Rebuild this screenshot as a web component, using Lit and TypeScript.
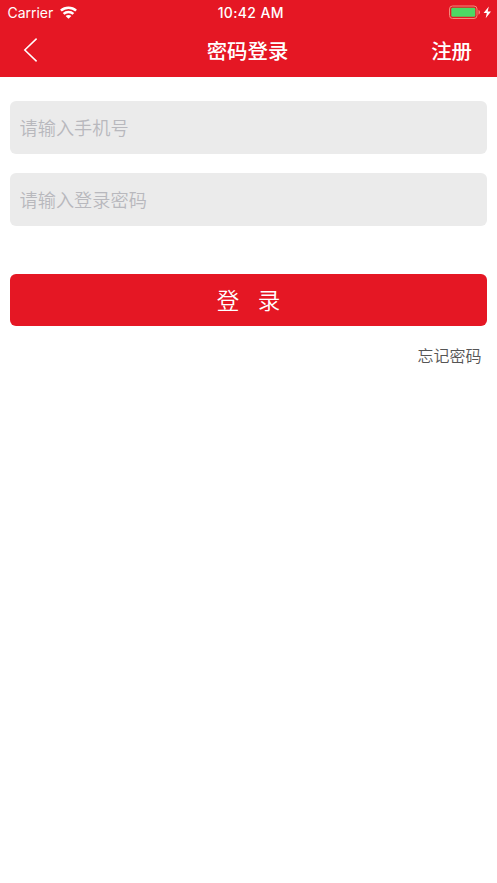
import { LitElement, html, css } from "lit";
import { customElement } from "lit/decorators.js";

@customElement("app-root")
export class AppRoot extends LitElement {
  static styles = css`
    :host {
      display: block;
      min-height: 100vh;
      background: #fff;
      font-family: Inter, "Noto Sans CJK SC", sans-serif;
    }
    * { box-sizing: border-box; }
    svg { display: block; }
    .header { height: 77px; background: #e51724; color: #fff; }
    .status, .nav {
      display: grid;
      grid-template-columns: 1fr auto 1fr;
      align-items: center;
    }
    .status { height: 25px; padding: 0 5px 0 7.5px; font-size: 14px; line-height: 25px; }
    .carrier { display: flex; align-items: center; gap: 6.5px; letter-spacing: -0.03px; }
    .wifi { margin-top: -1px; }
    .time { font-weight: 500; font-size: 14px; letter-spacing: 0.35px; padding-left: 2px; }
    .power { justify-self: end; }
    .nav { height: 52px; padding: 0 25px 0 23px; font-size: 20.4px; font-weight: 500; }
    .nav > span { padding-top: 1px; height: 52px; line-height: 51px; }
    .back { padding: 0 0 2px; border: 0; background: none; justify-self: start; }
    .register { justify-self: end; }
    .form { display: flex; flex-direction: column; padding: 24px 10px 0; }
    .field {
      width: 100%;
      height: 52.5px;
      margin: 0 0 19.5px;
      padding: 0 10px 1px 9.5px;
      border: 0;
      border-radius: 6px;
      background: #ebebeb;
      font: 350 18.2px "Noto Sans CJK SC", sans-serif;
      color: #333;
      outline: none;
    }
    .field::placeholder { color: #b8b8bd; opacity: 1; }
    .submit {
      height: 52.4px;
      margin-top: 29px;
      padding: 0 0 2px;
      border: 0;
      border-radius: 6px;
      background: #e51724;
      color: #fff;
      font: 350 22.5px "Noto Sans CJK SC", sans-serif;
      display: flex;
      justify-content: center;
      align-items: center;
      gap: 18.5px;
    }
    .forgot { align-self: flex-end; margin: 17.2px 5.5px 0 0; font-size: 16px; line-height: 24px; font-weight: 350; color: #555; }
  `;

  render() {
    return html`
      <header class="header">
        <div class="status">
          <div class="carrier">
            <span>Carrier</span>
            <svg class="wifi" width="17" height="13" viewBox="0 0 17 13" fill="none" stroke="#fff" stroke-width="2.5">
              <path d="M.9 4.7C5.2.7 11.8.7 16.1 4.7" />
              <path d="M3.6 7.9c2.7-2.5 7.1-2.5 9.8 0" />
              <path d="M8.5 12.8 5.6 10c1.6-1.4 4.2-1.4 5.8 0Z" fill="#fff" stroke="none" />
            </svg>
          </div>
          <div class="time">10:42 AM</div>
          <svg class="power" width="43" height="15" viewBox="0 0 43 15">
            <rect x=".5" y="1" width="27.5" height="12.5" rx="3" fill="none" stroke="#f28a7b" />
            <rect x="2.3" y="2.8" width="24" height="9" rx="1.4" fill="#4cd964" />
            <path d="M29.5 5c2 .7 2 4 0 4.7Z" fill="#f28a7b" />
            <path d="M39.8 1.4 34.6 8h3.2l-1.1 5.2L42 6.5h-3.3Z" fill="#fff" />
          </svg>
        </div>
        <nav class="nav">
          <button class="back" aria-label="返回">
            <svg width="15" height="26" viewBox="0 0 15 26" fill="none" stroke="#fff" stroke-width="1.5">
              <path d="M13.6 1.6 1.8 13l11.8 11.4" />
            </svg>
          </button>
          <span>密码登录</span>
          <span class="register">注册</span>
        </nav>
      </header>
      <main class="form">
        <input class="field" type="tel" placeholder="请输入手机号" />
        <input class="field" type="password" placeholder="请输入登录密码" />
        <button class="submit"><span>登</span><span>录</span></button>
        <a class="forgot">忘记密码</a>
      </main>
    `;
  }
}
